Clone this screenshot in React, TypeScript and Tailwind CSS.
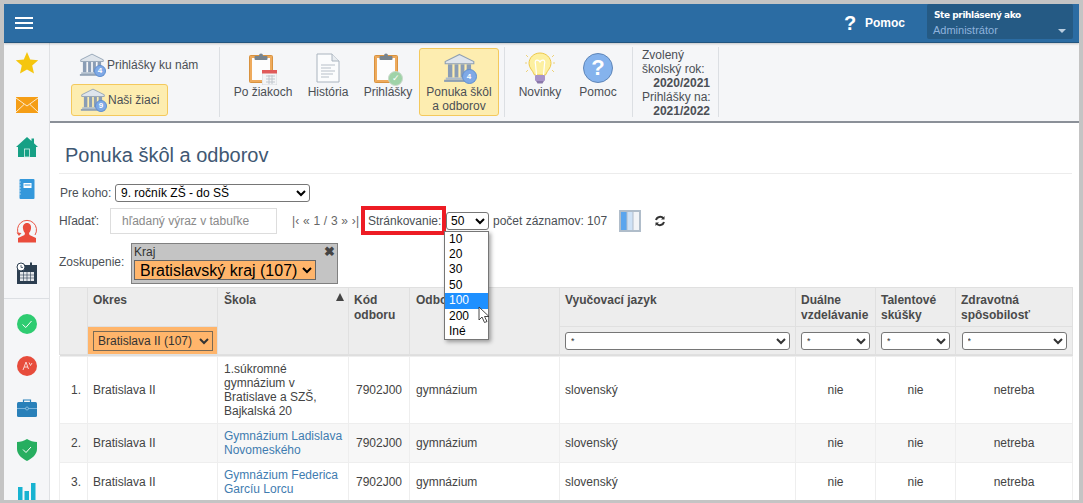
import React from "react";

const Bank = ({ n, size = 26, badge = 12 }: { n: string; size?: number; badge?: number }) => (
  <span className="relative inline-block shrink-0" style={{ width: size, height: size * 0.92 }}>
    <svg viewBox="0 0 30 27" className="w-full h-full block">
      <path d="M15 1 L28 7.5 V9.5 H2 V7.5 Z" fill="#dfe5ec" stroke="#8fa0b3" strokeWidth="1" />
      <rect x="4.5" y="10" width="4" height="12" fill="#8a9db5" />
      <rect x="10.5" y="10" width="3.5" height="12" fill="#8a9db5" />
      <rect x="16" y="10" width="3.5" height="12" fill="#8a9db5" />
      <rect x="21.5" y="10" width="4" height="12" fill="#8a9db5" />
      <rect x="2.5" y="22" width="25" height="2" fill="#aebccb" />
      <rect x="1" y="24" width="28" height="2" fill="#8fa0b3" />
    </svg>
    <span
      className="absolute right-[-1px] bottom-[-1px] rounded-full bg-[#7fa9e6] border border-[#5f8fd0] text-white font-bold flex items-center justify-center text-[8px] leading-none"
      style={{ width: badge, height: badge }}
    >
      {n}
    </span>
  </span>
);

const Clipboard = ({ children }: { children?: React.ReactNode }) => (
  <span className="relative inline-block w-[28px] h-[31px]">
    <svg viewBox="0 0 24 30" className="w-[24px] h-[30px] block">
      <rect x="0.5" y="2.5" width="23" height="27" rx="1" fill="#eeaa5c" stroke="#d8923f" strokeWidth="1" />
      <rect x="3" y="5" width="18" height="22" fill="#fdfdfd" />
      <rect x="5.5" y="3" width="13" height="4" rx="1" fill="#77848f" />
      <circle cx="12" cy="2.5" r="2" fill="#77848f" />
    </svg>
    {children}
  </span>
);

const ToolItem = ({ label, w, children, active }: { label: React.ReactNode; w: string; children: React.ReactNode; active?: boolean }) => (
  <div className={`flex flex-col items-center text-center shrink-0 ${w} ${active ? "bg-[#fdedb0] border border-[#f4c95d] rounded-[3px] h-[68px]" : "border border-transparent h-[68px]"}`}>
    <div className="h-[38px] flex items-center justify-center shrink-0">{children}</div>
    <div className="leading-[14px] -mt-[2px] text-[#4b4f55]">{label}</div>
  </div>
);

const Sep = () => <div className="w-px h-[70px] bg-[#dcdfe3] shrink-0" />;

const Side = ({ children }: { children: React.ReactNode }) => (
  <div className="h-[30px] w-[30px] flex items-center justify-center shrink-0">{children}</div>
);

const FSelect = ({ w }: { w: string }) => (
  <select className={`${w} h-[18px] bg-white border border-[#767676] rounded-[3px] text-[9px] font-normal text-[#333] pl-[1px]`}>
    <option>*</option>
  </select>
);

const cols = [28, 130, 131, 61, 150, 236, 80, 80, 117];
const th = "border border-[#e0e0e0] bg-[#ededed] text-left align-top font-bold text-[#4a4a4a] px-[5px] leading-[15px]";
const td = "border border-[#eeeeee] px-[5px] leading-[14px] align-middle";

const Row = ({ n, school, link, h, alt }: { n: string; school: React.ReactNode; link?: boolean; h: string; alt?: boolean }) => (
  <tr className={`${h} text-[#444] ${alt ? "bg-[#f7f7f7]" : "bg-white"}`}>
    <td className={`${td} text-right`}><span className="pr-[1px]">{n}</span></td>
    <td className={td}>Bratislava II</td>
    <td className={`${td} pl-[6px] ${link ? "text-[#3f7cb0]" : "text-[#444]"}`}>{school}</td>
    <td className={`${td} text-center`}>7902J00</td>
    <td className={`${td} pl-[6px]`}>gymnázium</td>
    <td className={td}>slovenský</td>
    <td className={`${td} text-center`}>nie</td>
    <td className={`${td} text-center`}>nie</td>
    <td className={`${td} text-center`}>netreba</td>
  </tr>
);

export default function App() {
  return (
    <div className="h-[503px] w-[1083px] overflow-hidden bg-[#c4c4c4] pt-[4px] pl-[4px] pr-[4px] pb-[3px] text-[12px] font-['Liberation_Sans',Arial,sans-serif]">
      <div className="h-[496px] w-[1075px] bg-white flex flex-col overflow-hidden">
        <header className="h-[39px] shrink-0 bg-[#2b6ca3] border-b border-[#22557f] flex items-center pl-[11px] pr-[6px] shadow-[0_1px_2px_rgba(0,0,0,0.2)] z-10">
          <div className="flex flex-col gap-[3px] w-[18px]">
            <span className="h-[2px] bg-white" />
            <span className="h-[2px] bg-white" />
            <span className="h-[2px] bg-white" />
          </div>
          <div className="ml-auto flex items-center font-bold text-white">
            <span className="text-[20px] w-[12px] leading-none font-bold">?</span>
            <span className="ml-[9px] mr-[22px] text-[12px]">Pomoc</span>
          </div>
          <div className="w-[146px] h-[35px] -mt-[3px] bg-[#255a84] rounded-[2px] pl-[7px] relative">
            <div className="font-bold text-white text-[9px] leading-[12px] pt-[5px] font-['DejaVu_Sans',sans-serif] tracking-[-0.42px]">Ste prihlásený ako</div>
            <div className="text-[#8fb3dd] text-[11px] leading-[12px] mt-[3px] -ml-px">Administrátor</div>
            <span className="absolute right-[7px] bottom-[6px] w-0 h-0 border-l-[4px] border-r-[4px] border-t-[4px] border-l-transparent border-r-transparent border-t-[#b9cde0]" />
          </div>
        </header>

        <div className="flex flex-1 min-h-0">
          <aside className="w-[46px] shrink-0 bg-[#f5f6f8] border-r border-[#dfe1e4] flex flex-col items-center pt-[5px]">
            <div className="flex flex-col gap-[12px] items-center">
              <Side>
                <svg viewBox="0 0 24 24" className="w-[24px] h-[24px]"><path d="M12 1 L15.2 8.6 L23.2 9.3 L17.2 14.6 L19 22.6 L12 18.4 L5 22.6 L6.8 14.6 L0.8 9.3 L8.8 8.6 Z" fill="#f5c60f" /></svg>
              </Side>
              <Side>
                <svg viewBox="0 0 22 16" className="w-[22px] h-[16px]"><rect width="22" height="16" fill="#f59e16" /><path d="M0 1 L11 9 L22 1 M0 15 L8 7.5 M22 15 L14 7.5" stroke="#fff" strokeWidth="0.8" fill="none" /></svg>
              </Side>
              <Side>
                <svg viewBox="0 0 22 22" className="w-[22px] h-[22px]"><path d="M11 1 L15.5 5 V2.5 H18 V7.2 L22 11 H20 V21 H2 V11 H0 Z" fill="#16a085" /><rect x="8.5" y="13" width="5" height="8" fill="none" stroke="#d6f0ea" strokeWidth="0.8" /></svg>
              </Side>
              <Side>
                <svg viewBox="0 0 16 20" className="w-[16px] h-[20px]"><rect x="0.5" width="15" height="20" rx="1" fill="#3498db" /><rect x="4.5" y="4" width="8" height="5" fill="#fff" /><rect x="5.5" y="5.5" width="6" height="1" fill="#3498db" /><path d="M0 3h2M0 6h2M0 9h2M0 12h2M0 15h2" stroke="#c9e3f6" strokeWidth="0.8" /></svg>
              </Side>
              <Side>
                <svg viewBox="0 0 22 24" className="w-[22px] h-[24px]"><path d="M3 16 A9.5 9.5 0 1 1 19 16" fill="none" stroke="#ea5545" strokeWidth="1" /><path d="M0.5 13.5 L3 17 L5.5 14" fill="#ea5545" /><path d="M11 4 C14 4 15.5 6.5 15 9.5 C14.7 11.5 14 13 13 14 L13.5 16 L20 19 V23.5 H2 V19 L8.5 16 L9 14 C8 13 7.3 11.5 7 9.5 C6.5 6.5 8 4 11 4 Z" fill="#ea4c3c" /></svg>
              </Side>
              <Side>
                <svg viewBox="0 0 22 22" className="w-[22px] h-[22px]"><rect x="1" y="3" width="20" height="19" fill="#2c3e50" /><rect x="14" y="0.5" width="2" height="5" fill="#2c3e50" /><g fill="#e4e7ea"><rect x="4" y="10" width="14" height="9" /></g><path d="M4 13h14M4 16h14M7.5 10v9M11 10v9M14.5 10v9" stroke="#2c3e50" strokeWidth="0.6" /><circle cx="5" cy="5" r="4" fill="#fff" stroke="#2c3e50" strokeWidth="1" /><path d="M5 3v2.4h2" stroke="#2c3e50" strokeWidth="0.8" fill="none" /></svg>
              </Side>
            </div>
            <div className="w-full h-px bg-[#dcdfe3] mt-[10px] mb-[10px] shrink-0" />
            <div className="flex flex-col gap-[12px] items-center">
              <Side>
                <svg viewBox="0 0 20 20" className="w-[20px] h-[20px]"><circle cx="10" cy="10" r="10" fill="#2ecc71" /><path d="M5.5 10.5 L8.8 13.5 L14.5 7" stroke="#fff" strokeWidth="1" fill="none" /></svg>
              </Side>
              <Side>
                <svg viewBox="0 0 20 20" className="w-[20px] h-[20px]"><circle cx="10" cy="10" r="10" fill="#e74c3c" /><path d="M6 14 L9 6 L11.5 13 M7 11 H11 M12 6.5 L13.5 9.5 L15 7" stroke="#f9d4cf" strokeWidth="1" fill="none" /></svg>
              </Side>
              <Side>
                <svg viewBox="0 0 20 18" className="w-[20px] h-[18px]"><path d="M6.5 3 V1 H13.5 V3" fill="none" stroke="#2980b9" strokeWidth="1.2" /><rect y="3" width="20" height="15" rx="1.5" fill="#2980b9" /><path d="M0 9.5 H20" stroke="#8fc1e3" strokeWidth="0.8" /><circle cx="10" cy="9.5" r="1.5" fill="#2980b9" stroke="#bcdcf0" strokeWidth="0.6" /></svg>
              </Side>
              <Side>
                <svg viewBox="0 0 20 22" className="w-[20px] h-[22px]"><path d="M10 0 C13 2 16.5 3 20 3 V10 C20 15.5 15 19.5 10 22 C5 19.5 0 15.5 0 10 V3 C3.5 3 7 2 10 0 Z" fill="#27ae60" /><path d="M6 10.5 L9 13.5 L14 8" stroke="#fff" strokeWidth="1" fill="none" /></svg>
              </Side>
              <Side>
                <svg viewBox="0 0 18 18" className="w-[18px] h-[18px] mt-[-2px]"><rect x="0" y="5" width="4.5" height="13" fill="#17b3d1" /><rect x="6.5" y="9" width="4.5" height="9" fill="#17b3d1" /><rect x="13" y="1" width="4.5" height="17" fill="#17b3d1" /></svg>
              </Side>
            </div>
          </aside>

          <main className="flex-1 min-w-0 flex flex-col">
            <div className="h-[80px] shrink-0 bg-[#f5f6f8] border-b-2 border-[#8b9098] flex items-center">
              <div className="w-[169px] shrink-0 pl-[21px] flex flex-col text-[#4b4f55]">
                <div className="h-[32px] flex items-center pl-[8px] gap-[2px] mb-[3px]">
                  <Bank n="4" />
                  <span>Prihlášky ku nám</span>
                </div>
                <div className="h-[32px] w-[97px] flex items-center pl-[8px] gap-[2px] bg-[#fdedb0] border border-[#f4c95d] rounded-[3px]">
                  <Bank n="9" />
                  <span>Naši žiaci</span>
                </div>
              </div>
              <Sep />
              <div className="w-[7px] shrink-0" />
              <ToolItem label="Po žiakoch" w="w-[72px]">
                <Clipboard>
                  <svg viewBox="0 0 15 15" className="absolute right-0 bottom-[-1px] w-[15px] h-[15px]"><rect width="15" height="15" fill="#f3f4f6" stroke="#b5bcc4" strokeWidth="0.5" /><rect width="15" height="3.5" fill="#e05a5a" /><path d="M4 6h9M4 9h9M4 12h9M7 5v9M10 5v9" stroke="#c0c6cd" strokeWidth="1" /></svg>
                </Clipboard>
              </ToolItem>
              <div className="w-[5px] shrink-0" />
              <ToolItem label="História" w="w-[48px]">
                <svg viewBox="0 0 24 30" className="w-[24px] h-[30px]"><path d="M1 1 H16 L23 8 V29 H1 Z" fill="#fbfcfd" stroke="#aab4bf" strokeWidth="1" /><path d="M16 1 V8 H23" fill="#e8ecf0" stroke="#aab4bf" strokeWidth="1" /><path d="M5 12h14M5 15h10M5 18h14M5 21h12M5 24h8" stroke="#b7bfc8" strokeWidth="1" /></svg>
              </ToolItem>
              <div className="w-[10px] shrink-0" />
              <ToolItem label="Prihlášky" w="w-[52px]">
                <Clipboard>
                  <span className="absolute right-[-1px] bottom-[-2px] w-[15px] h-[15px] rounded-full bg-[#9fd3a8] border border-[#c9d9cb] text-white text-[9px] leading-[13px] text-center">✓</span>
                </Clipboard>
              </ToolItem>
              <div className="w-[5px] shrink-0" />
              <ToolItem label={<>Ponuka škôl<br />a odborov</>} w="w-[80px]" active>
                <Bank n="4" size={33} badge={15} />
              </ToolItem>
              <div className="w-[5px] shrink-0" />
              <Sep />
              <div className="w-[6px] shrink-0" />
              <ToolItem label="Novinky" w="w-[58px]">
                <svg viewBox="0 0 30 32" className="w-[30px] h-[32px]"><path d="M15 1 C9 1 4 5.5 4 11.5 C4 16 7.5 18 9.5 23 H20.5 C22.5 18 26 16 26 11.5 C26 5.5 21 1 15 1 Z" fill="#fdf0a0" stroke="#edc84a" strokeWidth="1" /><path d="M11.5 23 L10.5 12 C9 7.5 13.5 7 15 10 C16.5 7 21 7.5 19.5 12 L18.5 23" fill="none" stroke="#fff" strokeWidth="1.2" /><rect x="10" y="23" width="10" height="6" rx="1" fill="#a894c9" /><path d="M11 29 H19 L17.5 31.5 H12.5 Z" fill="#8a78aa" /><path d="M0 11h2M28 11h2M1 3l2 2M29 3l-2 2M1 20l2-2M29 20l-2-2" stroke="#edd27a" strokeWidth="1" /></svg>
              </ToolItem>
              <ToolItem label="Pomoc" w="w-[58px]">
                <span className="w-[30px] h-[30px] rounded-full bg-[#85b3ed] border border-[#5f86b8] text-white text-[22px] font-bold flex items-center justify-center leading-none">?</span>
              </ToolItem>
              <div className="w-[5px] shrink-0" />
              <Sep />
              <div className="w-[68px] ml-[9px] mr-[8px] mt-[1px] shrink-0 text-[#4b4f55] leading-[14px]">
                <div>Zvolený</div>
                <div className="whitespace-nowrap">školský rok:</div>
                <div className="text-right font-bold">2020/2021</div>
                <div className="whitespace-nowrap">Prihlášky na:</div>
                <div className="text-right font-bold">2021/2022</div>
              </div>
              <Sep />
            </div>

            <div className="pl-[9px] pr-[7px] flex-1 min-h-0 flex flex-col text-[#4b4f55]">
              <h1 className="text-[20px] leading-[24px] font-normal text-[#3f5873] pl-[6px] mt-[20px] shrink-0">Ponuka škôl a odborov</h1>
              <div className="h-px bg-[#ececec] mt-[6px] shrink-0" />
              <div className="flex items-center mt-[10px] h-[18px] shrink-0">
                <span className="pl-[1px] w-[56px]">Pre koho:</span>
                <select className="w-[195px] h-[18px] bg-white border border-[#767676] rounded-[3px] text-[12px] text-black pl-[1px]">
                  <option>9. ročník ZŠ - do SŠ</option>
                </select>
              </div>
              <div className="flex items-center mt-[4px] h-[29px] shrink-0">
                <span className="w-[51px]">Hľadať:</span>
                <div className="w-[167px] h-[26px] border border-[#dddddd] text-[#8a8a8a] flex items-center pl-[11px]">hľadaný výraz v tabuľke</div>
                <span className="ml-[15px] w-[69px] whitespace-nowrap text-[#666] tracking-[0.2px]">|‹ « 1 / 3 » ›|</span>
                <div className="w-[85px] h-[29px] border-[4px] border-[#ed1c24] flex items-center pl-[3px] whitespace-nowrap bg-white">Stránkovanie:</div>
                <div className="relative">
                  <select className="w-[43px] h-[18px] bg-white border border-[#767676] rounded-[3px] text-[12px] text-black block">
                    <option>50</option>
                  </select>
                  <div className="absolute left-[-2px] top-[19px] w-[45px] bg-white border border-[#767676] shadow-[2px_2px_4px_rgba(0,0,0,0.35)] text-black text-[12px] leading-[15.4px] z-20">
                    {["10", "20", "30", "50"].map((v) => <div key={v} className="pl-[4px]">{v}</div>)}
                    <div className="pl-[4px] bg-[#1e90ff] text-white">100</div>
                    <div className="pl-[4px]">200</div>
                    <div className="pl-[4px]">Iné</div>
                    <svg viewBox="0 0 12 18" className="absolute left-[33px] top-[74px] w-[12px] h-[18px]"><path d="M1 1 V14 L4 11 L6.5 16.5 L9 15.5 L6.5 10.5 H11 Z" fill="#fff" stroke="#333" strokeWidth="0.9" /></svg>
                  </div>
                </div>
                <span className="ml-[4px] whitespace-nowrap">počet záznamov: 107</span>
                <svg viewBox="0 0 22 22" className="ml-[12px] w-[22px] h-[22px]"><rect width="22" height="22" fill="#b0bdca" /><rect x="2" y="2" width="5.5" height="18" fill="#5aa5ee" /><rect x="8.5" y="2" width="5" height="18" fill="#cfe2f6" /><rect x="14.5" y="2" width="5.5" height="18" fill="#f2f4f7" /></svg>
                <svg viewBox="0 0 24 24" className="ml-[13px] w-[12px] h-[12px]" fill="none" stroke="#333" strokeWidth="4"><path d="M4 10 A8.5 8.5 0 0 1 19 7" /><path d="M20 14 A8.5 8.5 0 0 1 5 17" /><path d="M21 2 V9 H14 Z M3 22 V15 H10 Z" fill="#333" stroke="none" /></svg>
              </div>
              <div className="flex items-center mt-[8px] h-[41px] shrink-0">
                <span className="w-[72px] -mt-[3px]">Zoskupenie:</span>
                <div className="relative w-[207px] h-[41px] bg-[#c4c4c4] border border-[#808080] pl-[2px]">
                  <div className="text-[#333] leading-[14px] pt-[1px]">Kraj</div>
                  <select className="w-[182px] h-[20px] mt-[1px] pl-[1px] bg-[#ffb56b] border border-[#666] text-[16px] text-black leading-none">
                    <option>Bratislavský kraj (107)</option>
                  </select>
                  <span className="absolute right-[2px] top-[1px] text-[13px] leading-[13px] font-bold text-[#444]">✖</span>
                </div>
              </div>
              <table className="table-fixed border-collapse mt-[3px] w-[1013px] shrink-0">
                <colgroup>
                  {cols.map((c, i) => <col key={i} style={{ width: c }} />)}
                </colgroup>
                <thead>
                  <tr className="h-[39px]">
                    <th rowSpan={2} className={th} />
                    <th className={`${th} pt-[5px]`}>Okres</th>
                    <th rowSpan={2} className={`${th} pt-[5px] pl-[6px] relative`}>
                      Škola
                      <span className="absolute right-[4px] top-[5px] w-0 h-0 border-l-[4px] border-r-[4px] border-b-[8px] border-l-transparent border-r-transparent border-b-[#444]" />
                    </th>
                    <th rowSpan={2} className={`${th} pt-[5px]`}>Kód<br />odboru</th>
                    <th rowSpan={2} className={`${th} pt-[5px] pl-[6px]`}>Odbor</th>
                    <th className={`${th} pt-[5px]`}>Vyučovací jazyk</th>
                    <th className={`${th} pt-[5px]`}>Duálne<br />vzdelávanie</th>
                    <th className={`${th} pt-[5px]`}>Talentové<br />skúšky</th>
                    <th className={`${th} pt-[5px]`}>Zdravotná<br />spôsobilosť</th>
                  </tr>
                  <tr className="h-[28px]">
                    <th className="border border-[#e0e0e0] bg-[#ffb56b] px-[5px] align-middle">
                      <select className="w-[120px] h-[20px] bg-[#ffb56b] border border-[#7a6a55] text-[12px] font-normal text-[#333]">
                        <option>Bratislava II (107)</option>
                      </select>
                    </th>
                    <th className="border border-[#e0e0e0] bg-[#ededed] px-[5px] align-middle"><FSelect w="w-[225px]" /></th>
                    <th className="border border-[#e0e0e0] bg-[#ededed] px-[5px] align-middle"><FSelect w="w-[69px]" /></th>
                    <th className="border border-[#e0e0e0] bg-[#ededed] px-[5px] align-middle"><FSelect w="w-[69px]" /></th>
                    <th className="border border-[#e0e0e0] bg-[#ededed] px-[5px] align-middle"><FSelect w="w-[105px]" /></th>
                  </tr>
                  <tr className="h-[2px]"><th colSpan={9} className="bg-[#dedede] p-0 h-[2px]" /></tr>
                </thead>
                <tbody>
                  <Row n="1." h="h-[67px]" school={<>1.súkromné<br />gymnázium v<br />Bratislave a SZŠ,<br />Bajkalská 20</>} />
                  <Row n="2." h="h-[39px]" alt link school={<>Gymnázium Ladislava<br />Novomeského</>} />
                  <Row n="3." h="h-[39px]" link school={<>Gymnázium Federica<br />Garcíu Lorcu</>} />
                </tbody>
              </table>
            </div>
          </main>
        </div>
      </div>
    </div>
  );
}
